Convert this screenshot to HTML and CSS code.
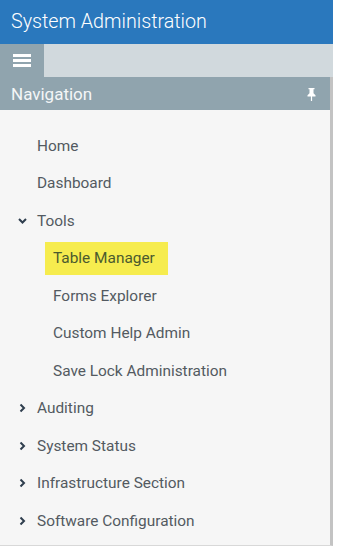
FILE: index.html
```html
<!DOCTYPE html>
<html>
<head>
<meta charset="utf-8">
<link rel="stylesheet" href="styles.css">
</head>
<body>
<div class="app">
  <header class="topbar">System Administration</header>
  <div class="toolbar">
    <button class="burger" aria-label="menu"><span></span><span></span><span></span></button>
  </div>
  <div class="panel">
    <div class="panel-head">
      <span>Navigation</span>
      <svg class="pin" width="9" height="13" viewBox="0 0 9 13"><path d="M1.5 0h6v1.2h-1v4l2 2v1.3h-3.4V13h-1.2V8.5H.5V7.2l2-2v-4h-1z" fill="#fff"/></svg>
    </div>
    <ul class="nav">
      <li class="item"><span class="label">Home</span></li>
      <li class="item"><span class="label">Dashboard</span></li>
      <li class="item"><svg class="chev" width="9" height="6" viewBox="0 0 9 6"><path d="M1 1l3.5 3.5L8 1" fill="none" stroke="#2f3e4e" stroke-width="2"/></svg><span class="label">Tools</span></li>
      <li class="item sub"><span class="label hl">Table Manager</span></li>
      <li class="item sub"><span class="label">Forms Explorer</span></li>
      <li class="item sub"><span class="label">Custom Help Admin</span></li>
      <li class="item sub"><span class="label">Save Lock Administration</span></li>
      <li class="item"><svg class="chev" width="9" height="9" viewBox="0 0 9 9"><path d="M2.5 1l3.5 3.5L2.5 8" fill="none" stroke="#2f3e4e" stroke-width="2"/></svg><span class="label">Auditing</span></li>
      <li class="item"><svg class="chev" width="9" height="9" viewBox="0 0 9 9"><path d="M2.5 1l3.5 3.5L2.5 8" fill="none" stroke="#2f3e4e" stroke-width="2"/></svg><span class="label">System Status</span></li>
      <li class="item"><svg class="chev" width="9" height="9" viewBox="0 0 9 9"><path d="M2.5 1l3.5 3.5L2.5 8" fill="none" stroke="#2f3e4e" stroke-width="2"/></svg><span class="label">Infrastructure Section</span></li>
      <li class="item"><svg class="chev" width="9" height="9" viewBox="0 0 9 9"><path d="M2.5 1l3.5 3.5L2.5 8" fill="none" stroke="#2f3e4e" stroke-width="2"/></svg><span class="label">Software Configuration</span></li>
    </ul>
  </div>
</div>
</body>
</html>
```
FILE: styles.css
```css
html, body { margin: 0; padding: 0; background: #fff; }
body { font-family: Roboto, "Noto Sans", sans-serif; }
.app { width: 333px; }
.topbar {
  background: #2a78bd;
  color: #fff;
  height: 44px;
  box-sizing: border-box;
  padding-left: 11px;
  font-size: 19.7px;
  font-weight: 300;
  line-height: 43px;
}
.toolbar { background: #d1d9dd; height: 33px; display: flex; }
.burger {
  width: 44px; height: 33px; border: 0; padding: 0; margin: 0;
  background: #90a4ae;
  display: flex; flex-direction: column; align-items: center; justify-content: center; gap: 2px;
}
.burger span { display: block; width: 18px; height: 3px; background: #fff; }
.panel {
  border-right: 3px solid #c3c3c3;
  border-bottom: 1px solid #d8d8d8;
  height: 469px;
  box-sizing: border-box;
  background: #f6f6f6;
}
.panel-head {
  background: #90a4ae;
  height: 33px;
  display: flex; align-items: center; justify-content: space-between;
  padding: 0 14px 0 11px;
  color: #f4f6f7;
  font-size: 17px;
}
.pin { margin-top: 2px; }
.nav { list-style: none; margin: 0; padding: 17px 0 0 0; }
.item {
  height: 37.5px;
  display: flex; align-items: center;
  padding-left: 37px;
  position: relative;
  font-size: 15.4px;
  color: #535a61;
}
.item.sub { padding-left: 45px; }
.chev { position: absolute; left: 18px; top: 50%; transform: translateY(-50%); }
.label { padding: 0; }
.sub .label { padding: 0 8px; }
.sub .label.hl {
  background: #f6ec4e;
  height: 33px; line-height: 33px;
  padding: 0 13px 0 8px;
  color: #4b5a2e;
}
```
